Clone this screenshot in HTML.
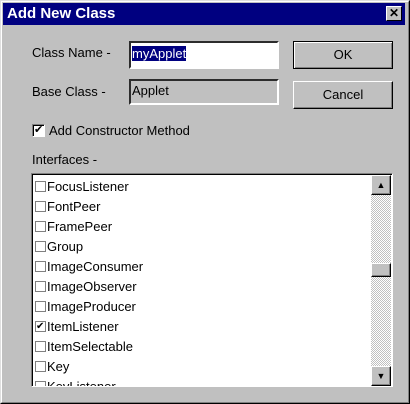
<!DOCTYPE html>
<html><head><style>
body{margin:0;width:410px;height:404px;overflow:hidden;background:#c0c0c0;font-family:"Liberation Sans",sans-serif;font-size:13px;}
.dlg{position:absolute;left:0;top:0;width:410px;height:404px;box-sizing:border-box;border:1px solid #dfdfdf;border-right-color:#000;border-bottom-color:#000;}
.dlg2{position:absolute;left:0;top:0;right:0;bottom:0;border:1px solid #fff;border-right-color:#808080;border-bottom-color:#808080;}
.title{position:absolute;left:3px;top:3px;width:402px;height:22px;background:#000080;color:#fff;font-weight:bold;font-size:15px;line-height:22px;padding-left:4px;box-sizing:border-box;}
.x{position:absolute;right:3px;top:3px;width:16px;height:15px;background:#c0c0c0;border:1px solid;border-color:#fff #000 #000 #fff;box-sizing:border-box;color:#000;font-size:12px;font-weight:bold;line-height:13px;text-align:center;}
.a{position:absolute;}
.sunk{position:absolute;box-sizing:border-box;border:2px inset;border-color:#808080 #fff #fff #808080;}
.btn{position:absolute;box-sizing:border-box;background:#c0c0c0;border:1px solid;border-color:#fff #000 #000 #fff;box-shadow:inset -1px -1px #808080;text-align:center;}
.row{position:absolute;left:3px;height:20px;line-height:20px;font-size:13px;}
.cb{display:inline-block;width:11px;height:11px;border:1px solid #808080;box-sizing:border-box;vertical-align:-1px;margin-right:1px;background:#fff;position:relative;}
</style></head><body>
<div class="dlg"><div class="dlg2"></div></div>
<div class="title">Add New Class<div class="x">✕</div></div>
<div class="a" style="left:32px;top:45px">Class Name -</div>
<div class="sunk" style="left:129px;top:41px;width:150px;height:28px;background:#fff"><span style="position:absolute;left:1px;top:3px;background:#000080;color:#fff;line-height:15px;font-size:13px">myApplet</span></div>
<div class="btn" style="left:293px;top:41px;width:100px;height:28px;line-height:26px;border:1px solid #000;box-shadow:inset 1px 1px #fff,inset -1px -1px #808080">OK</div>
<div class="a" style="left:32px;top:84px">Base Class -</div>
<div class="sunk" style="left:129px;top:79px;width:150px;height:26px;"><span style="position:absolute;left:1px;top:2px">Applet</span></div>
<div class="btn" style="left:293px;top:81px;width:100px;height:28px;line-height:26px">Cancel</div>
<div class="a" style="left:32px;top:124px;width:13px;height:13px;box-sizing:border-box;background:#fff;border:1px solid;border-color:#808080 #fff #fff #808080;box-shadow:inset 1px 1px #000"><span style="position:absolute;left:1px;top:-2px;font-size:11px">✔</span></div>
<div class="a" style="left:49px;top:123px">Add Constructor Method</div>
<div class="a" style="left:32px;top:152px">Interfaces -</div>
<div class="sunk" style="left:31px;top:173px;width:362px;height:214px;background:#fff;overflow:hidden;border:1px solid;border-color:#808080 #fff #fff #808080;box-shadow:inset 1px 1px #000">
<div class="row" style="top:3px"><span class="cb"></span>FocusListener</div>
<div class="row" style="top:23px"><span class="cb"></span>FontPeer</div>
<div class="row" style="top:43px"><span class="cb"></span>FramePeer</div>
<div class="row" style="top:63px"><span class="cb"></span>Group</div>
<div class="row" style="top:83px"><span class="cb"></span>ImageConsumer</div>
<div class="row" style="top:103px"><span class="cb"></span>ImageObserver</div>
<div class="row" style="top:123px"><span class="cb"></span>ImageProducer</div>
<div class="row" style="top:143px"><span class="cb"><span style="position:absolute;left:0;top:-5px;font-size:10px">✔</span></span>ItemListener</div>
<div class="row" style="top:163px"><span class="cb"></span>ItemSelectable</div>
<div class="row" style="top:183px"><span class="cb"></span>Key</div>
<div class="row" style="top:203px"><span class="cb"></span>KeyListener</div>
<div style="position:absolute;left:339px;top:1px;width:20px;height:211px;background:repeating-conic-gradient(#fff 0 25%,#c0c0c0 0 50%) 0 0/2px 2px"></div>
<div class="btn" style="left:339px;top:1px;width:20px;height:20px;font-size:9px;line-height:18px">▲</div>
<div class="btn" style="left:339px;top:89px;width:20px;height:14px"></div>
<div class="btn" style="left:339px;top:192px;width:20px;height:20px;font-size:9px;line-height:18px">▼</div>
</div>
</body></html>
